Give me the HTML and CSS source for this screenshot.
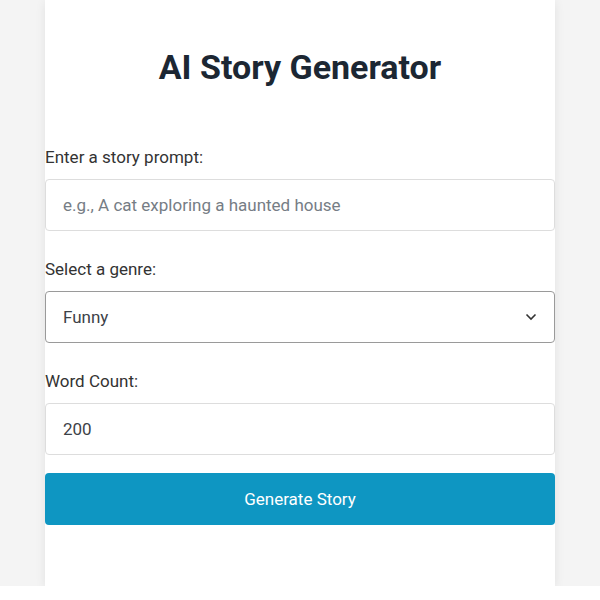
FILE: index.html
```html
<!DOCTYPE html>
<html>
<head>
<meta charset="utf-8">
<link rel="stylesheet" href="styles.css">
</head>
<body>
<div class="page">
  <div class="card">
    <h1 class="title">AI Story Generator</h1>
    <div class="field">
      <label class="label">Enter a story prompt:</label>
      <input class="input" type="text" placeholder="e.g., A cat exploring a haunted house">
    </div>
    <div class="field">
      <label class="label">Select a genre:</label>
      <div class="select">
        <span>Funny</span>
        <svg class="chev" width="12" height="8" viewBox="0 0 12 8"><path d="M1.5 1.5 L6 6 L10.5 1.5" fill="none" stroke="#333" stroke-width="1.6"/></svg>
      </div>
    </div>
    <div class="field">
      <label class="label">Word Count:</label>
      <input class="input value" type="text" value="200">
    </div>
    <button class="btn">Generate Story</button>
  </div>
</div>
</body>
</html>
```
FILE: styles.css
```css
html { background: #ffffff; }
body {
  margin: 0;
  font-family: Roboto, "Noto Sans", sans-serif;
  background: #ffffff;
}
.page {
  background: #f4f4f4;
  height: 586px;
  padding: 0 45px;
}
.card {
  background: #ffffff;
  height: 586px;
  box-shadow: 0 2px 10px rgba(0,0,0,0.08);
  display: flex;
  flex-direction: column;
}
.title {
  margin: 0;
  padding-top: 47px;
  padding-bottom: 57px;
  text-align: center;
  font-size: 34px;
  line-height: 40px;
  font-weight: 700;
  color: #1c2733;
}
.field {
  display: flex;
  flex-direction: column;
  margin-bottom: 25px;
}
.label {
  font-size: 17px;
  line-height: 26px;
  color: #333333;
  margin-bottom: 9px;
}
.input {
  box-sizing: border-box;
  height: 52px;
  width: 100%;
  border: 1px solid #dddddd;
  border-radius: 4px;
  padding: 0 17px;
  font-family: Roboto, sans-serif;
  font-size: 17px;
  color: #3d4248;
  outline: none;
}
.input::placeholder { color: #767d85; }
.select {
  box-sizing: border-box;
  height: 52px;
  border: 1px solid #9a9a9a;
  border-radius: 4px;
  padding: 0 17px;
  display: flex;
  align-items: center;
  justify-content: space-between;
  font-size: 17px;
  color: #3d4248;
}
.btn {
  margin-top: -7px;
  height: 52px;
  border: none;
  border-radius: 4px;
  background: #0e96c2;
  color: #ffffff;
  font-family: Roboto, sans-serif;
  font-size: 17px;
}
```
